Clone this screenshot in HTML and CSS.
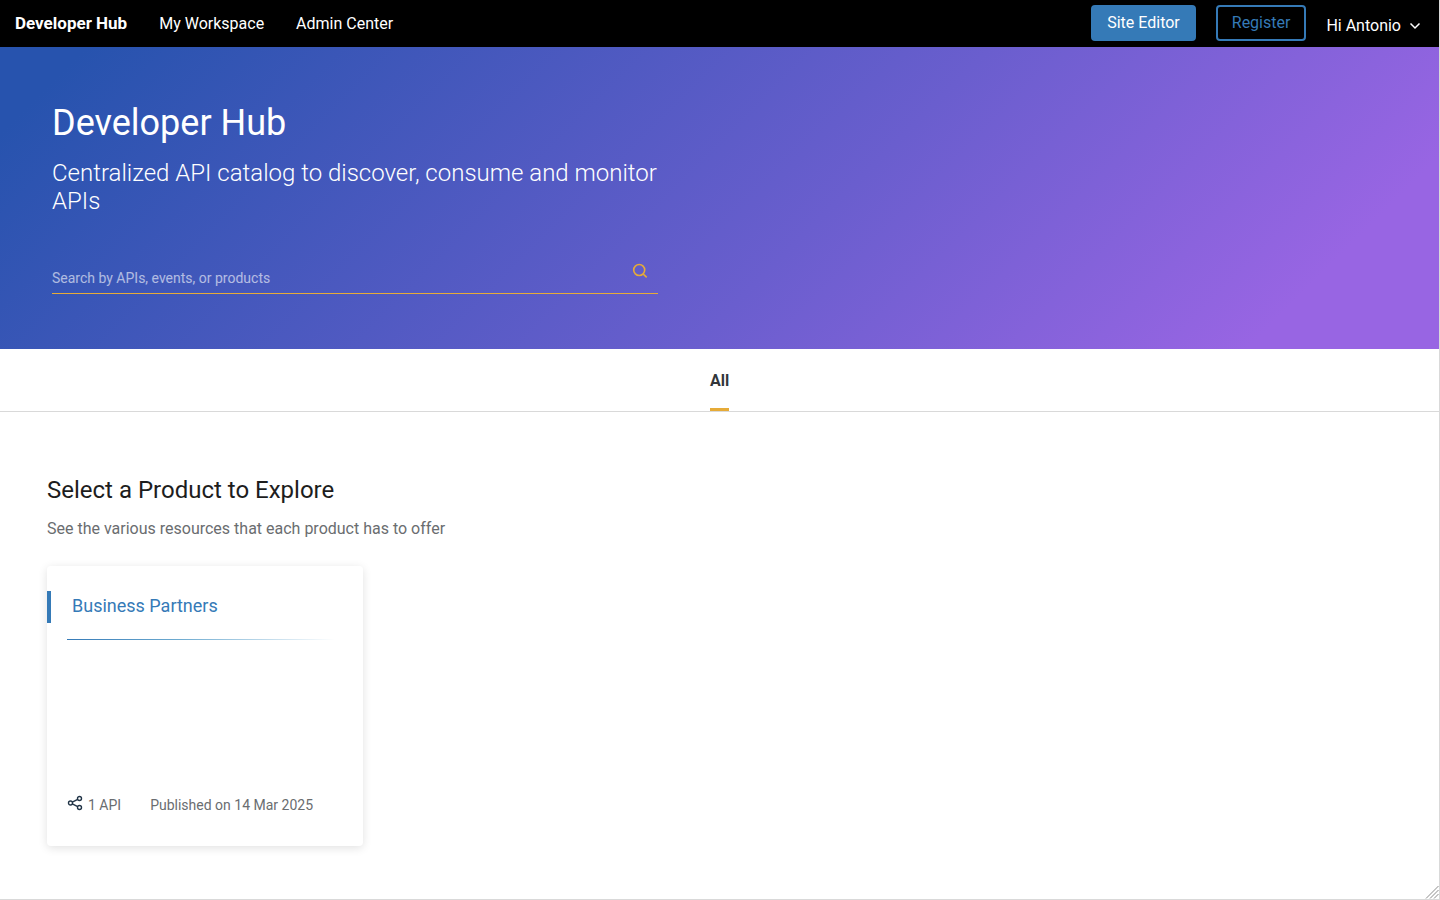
FILE: index.html
```html
<!DOCTYPE html>
<html lang="en">
<head>
<meta charset="utf-8">
<title>Developer Hub</title>
<link rel="stylesheet" href="styles.css">
</head>
<body>
<div class="frame">
  <header class="topbar">
    <nav class="nav">
      <a class="nav-link brand" href="#">Developer Hub</a>
      <a class="nav-link" href="#">My Workspace</a>
      <a class="nav-link" href="#">Admin Center</a>
    </nav>
    <div class="actions">
      <button class="btn btn-primary" type="button">Site Editor</button>
      <button class="btn btn-outline" type="button">Register</button>
      <button class="user-menu" type="button">Hi Antonio
        <svg class="chevron" viewBox="0 0 12 8" aria-hidden="true"><path d="M1.5 1.5 6 6l4.500-4.500"/></svg>
      </button>
    </div>
  </header>

  <section class="hero">
    <div class="hero-inner">
      <h1 class="hero-title">Developer Hub</h1>
      <p class="hero-subtitle">Centralized API catalog to discover, consume and monitor APIs</p>
      <form class="search">
        <input class="search-input" type="text" aria-label="Search" placeholder="Search by APIs, events, or products">
        <button class="search-button" type="button" aria-label="Search">
          <svg class="search-icon" viewBox="0 0 16 16" aria-hidden="true"><circle cx="7.200" cy="7" r="5.500"/><path d="m11.300 11.100 3.400 3.200"/></svg>
        </button>
      </form>
    </div>
  </section>

  <nav class="tabs">
    <a class="tab" href="#">All</a>
  </nav>

  <main class="content">
    <h2 class="content-title">Select a Product to Explore</h2>
    <p class="content-subtitle">See the various resources that each product has to offer</p>
    <article class="card">
      <h3 class="card-title"><a class="card-link" href="#">Business Partners</a></h3>
      <div class="card-rule"></div>
      <footer class="card-footer">
        <svg class="share-icon" viewBox="0 0 16 16" aria-hidden="true"><circle cx="3.500" cy="8" r="2"/><circle cx="12.500" cy="3.500" r="2"/><circle cx="12.500" cy="12.500" r="2"/><path d="m5.300 7.100 5.400-2.700M5.300 8.900l5.400 2.700"/></svg>
        <span class="api-count">1 API</span>
        <span class="published">Published on 14 Mar 2025</span>
      </footer>
    </article>
  </main>
  <svg class="resize-grip" viewBox="0 0 14 14" aria-hidden="true"><path d="M1 13.500 13.500 1M5 13.500 13.500 5M9 13.500 13.500 9"/></svg>
</div>
</body>
</html>
```
FILE: styles.css
```css
* { box-sizing: border-box; }

body {
  margin: 0;
  background: #fff;
  color: #1d1d1d;
  font-family: Roboto, "Noto Sans", sans-serif;
}

h1, h2, h3, p { margin: 0; font-weight: 400; }
a { color: inherit; text-decoration: none; }
button, input { font: inherit; }

.frame {
  position: relative;
  display: flex;
  flex-direction: column;
  min-height: 100vh;
  border-right: 1px solid #d9d9d9;
  border-bottom: 1px solid #d9d9d9;
}

.topbar {
  display: flex;
  justify-content: space-between;
  height: 47px;
  padding: 0 16px 0 15px;
  background: #000;
  color: #fff;
  font-size: 16px;
  line-height: 20px;
}

.nav { display: flex; align-items: baseline; gap: 32px; padding-top: 13px; }
.brand { font-size: 17px; font-weight: 700; }
.actions { display: flex; align-items: flex-start; gap: 20px; padding-top: 5px; }

.btn {
  height: 36px;
  padding: 0 14px;
  border: 2px solid #357ab7;
  border-radius: 4px;
  line-height: 20px;
}
.btn-primary { background: #357ab7; color: #fff; }
.btn-outline { background: transparent; color: #357ab7; }

.user-menu {
  display: flex;
  align-items: center;
  gap: 8px;
  padding: 11px 2px 0 0;
  border: 0;
  background: none;
  color: #fff;
}
.chevron { width: 12px; height: 8px; fill: none; stroke: #fff; stroke-width: 1.5; }

.hero {
  padding: 52px 52px 55px;
  background: linear-gradient(135deg, #2753ae 5%, #6a5ece 57%, #9865e3 89%);
  color: #fff;
}
.hero-inner { max-width: 606px; }
.hero-title { font-size: 36px; line-height: 48px; }
.hero-subtitle { margin-top: 12px; font-size: 24px; font-weight: 300; line-height: 28px; }

.search {
  display: flex;
  align-items: flex-start;
  margin-top: 40px;
  padding-right: 10px;
  border-bottom: 1px solid #e6ab38;
}
.search-input {
  flex: 1;
  height: 38px;
  padding: 8px 0 0;
  border: 0;
  outline: 0;
  background: none;
  color: #fff;
  font-size: 14px;
}
.search-input::placeholder { color: #fff; opacity: 0.6; }
.search-button { display: flex; padding: 8px 0; border: 0; background: none; }
.search-icon { width: 16px; height: 16px; fill: none; stroke: #e6ab38; stroke-width: 1.6; }

.tabs {
  display: flex;
  justify-content: center;
  height: 63px;
  border-bottom: 1px solid #d9d9d9;
}
.tab {
  padding-top: 22px;
  border-bottom: 3px solid #e6ab38;
  color: #32363a;
  font-size: 16px;
  font-weight: 700;
  line-height: 20px;
}

.content { padding: 62px 47px 53px; }
.content-title { font-size: 24px; line-height: 32px; }
.content-subtitle { margin-top: 13px; color: #6a6d70; font-size: 16px; line-height: 20px; }

.card {
  display: flex;
  flex-direction: column;
  width: 316px;
  min-height: 280px;
  margin-top: 27px;
  padding: 25px 20px 31px;
  border-radius: 4px;
  box-shadow: 0 2px 10px rgba(0, 0, 0, 0.12);
}
.card-title {
  margin-left: -20px;
  padding-bottom: 2px;
  padding-left: 21px;
  border-left: 4px solid #357ab7;
  color: #357ab7;
  font-size: 18px;
  line-height: 30px;
}
.card-rule {
  height: 1px;
  margin-top: 16px;
  background: linear-gradient(90deg, #357ab7, #6caad0 40%, transparent 97%);
}
.card-footer {
  display: flex;
  align-items: flex-start;
  margin-top: auto;
  color: #6a6d70;
  font-size: 14px;
  line-height: 20px;
}
.share-icon { width: 16px; height: 16px; margin-right: 5px; fill: none; stroke: #223548; stroke-width: 1.4; }
.published { margin-left: 29px; }

.resize-grip {
  position: absolute;
  right: 0;
  bottom: 0;
  width: 14px;
  height: 14px;
  stroke: #8c8c8c;
}
```
